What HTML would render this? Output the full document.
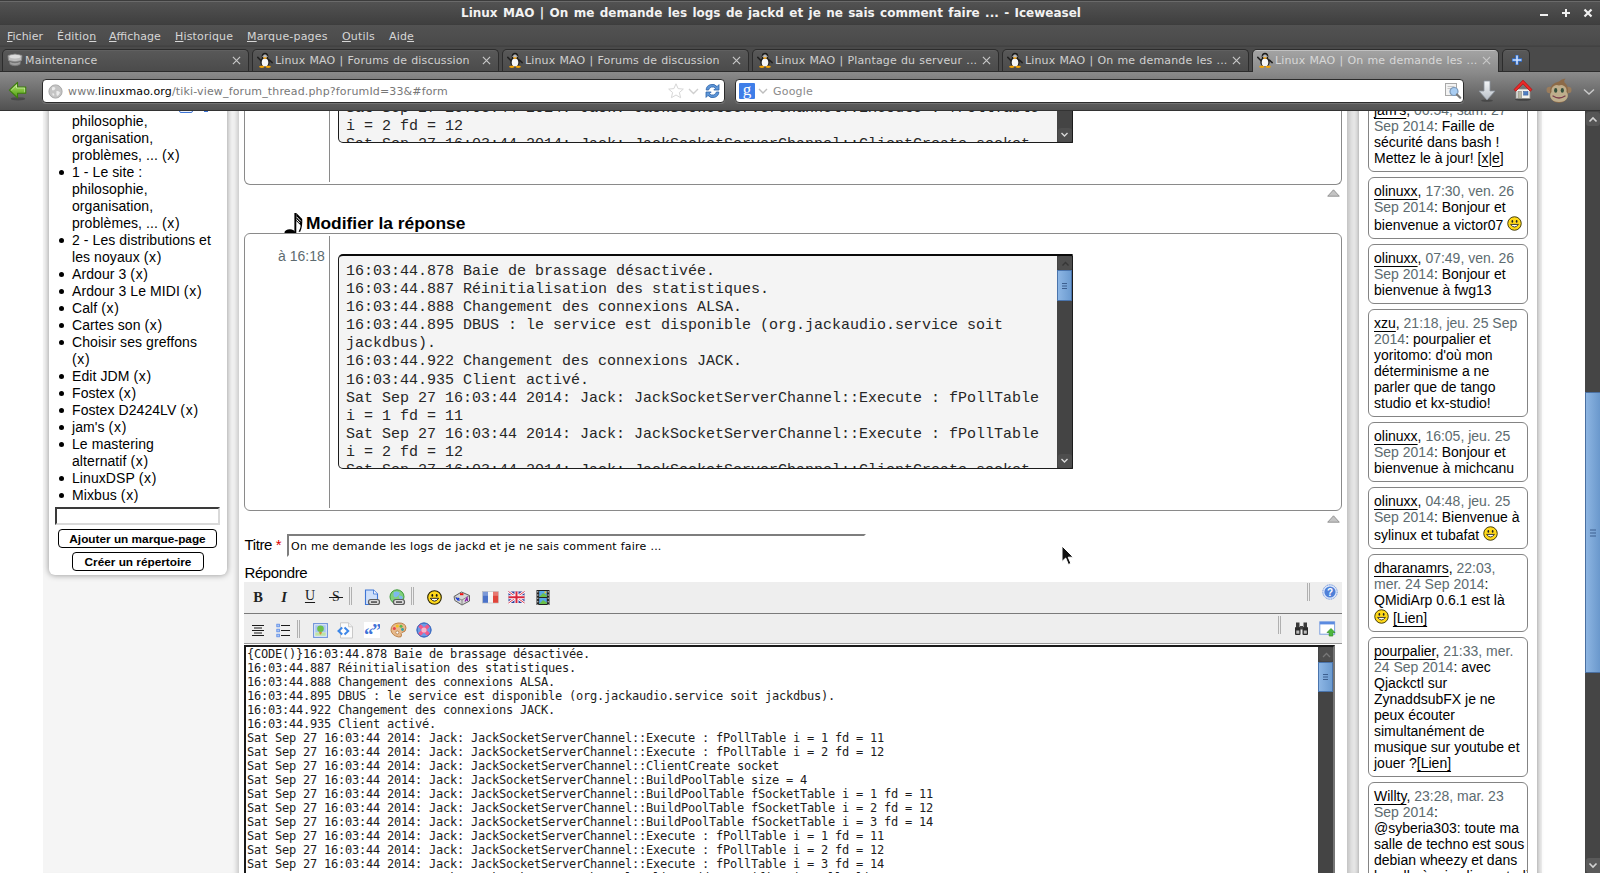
<!DOCTYPE html>
<html lang="fr">
<head>
<meta charset="utf-8">
<title>Linux MAO | On me demande les logs de jackd et je ne sais comment faire ... - Iceweasel</title>
<style>
*{box-sizing:border-box;}
html,body{margin:0;padding:0;}
body{width:1600px;height:873px;overflow:hidden;background:#fff;position:relative;font-family:"Liberation Sans",sans-serif;font-size:14px;color:#000;}
.abs{position:absolute;}
/* ---------- browser chrome ---------- */
#chrome{left:0;top:0;width:1600px;height:111px;font-family:"DejaVu Sans",sans-serif;color:#ddd;z-index:50;}
#titlebar{left:0;top:0;width:1600px;height:25px;background:linear-gradient(#3c3c3c 0,#3c3c3c 1px,#6a6a6a 1px,#6a6a6a 2px,#525252 2px,#3f3f3f 24px,#3c3c3c 25px);}
#titlebar .t{left:461px;top:5.5px;font-weight:bold;font-size:12px;color:#f2f2f2;word-spacing:1.200px;white-space:nowrap;}
#menubar{left:0;top:25px;width:1600px;height:22px;background:linear-gradient(#525252 0,#4a4a4a 20px,#404040 21px,#444 22px);font-size:11px;letter-spacing:.18px;color:#d6d6d6;}
#menubar span{position:absolute;top:5px;white-space:nowrap;}
#menubar u{text-decoration:underline;text-underline-offset:1px;}
#tabbar{left:0;top:47px;width:1600px;height:25px;background:#4a4a4a;border-bottom:1px solid #2c2c2c;}
.tab{position:absolute;top:2px;width:247px;height:22px;border:1px solid #2c2c2c;border-bottom:none;border-radius:5px 5px 0 0;background:linear-gradient(#686868 0,#585858 1px,#4b4b4b 100%);font-size:11px;letter-spacing:.15px;word-spacing:.45px;color:#d0d0d0;white-space:nowrap;}
.tab.active{height:23px;background:linear-gradient(#d0d0d0 0,#a2a2a2 1.500px,#8b8b8b 100%);color:#d8d8d8;}
.tab .fav{position:absolute;left:4px;top:2px;}
.url b{font-weight:normal;color:#000;}
.url{letter-spacing:.15px;}
.tab .lbl{position:absolute;left:22px;top:4px;}
.tab .x{position:absolute;right:7px;top:6px;width:9px;height:9px;}
#navbar{left:0;top:72px;width:1600px;height:39px;background:linear-gradient(#8b8b8b 0,#515151 38px,#333 38px,#333 39px);}
.field{position:absolute;top:7px;height:24px;background:#fff;border:1px solid #2b2b2b;border-radius:4px;font-size:11px;color:#777;box-shadow:0 1px 0 rgba(255,255,255,.15);}
/* ---------- page ---------- */
#page{left:0;top:110px;width:1585px;height:763px;overflow:hidden;background:#fff;}
#lcol{left:43px;top:0;width:196px;height:763px;background:#f5f5f5;box-shadow:inset -6px 0 5px -4px rgba(0,0,0,.2);}
#rcol{left:1347px;top:0;width:195px;height:763px;background:#f0f0f0;box-shadow:inset 7px 0 6px -4px rgba(0,0,0,.22);}

/* ---------- left column ---------- */
#lbox{left:6px;top:-40px;width:178px;height:505px;background:#fff;border-radius:0 0 6px 6px;box-shadow:0 0 6px rgba(0,0,0,.42);}
#lbox ul{position:absolute;left:0;top:26px;letter-spacing:.08px;margin:0;padding:0 0 0 23px;width:172px;list-style:none;font-size:14px;line-height:17px;}
#lbox li{position:relative;}
#lbox .rm{letter-spacing:.7px;}
#lbox li:before{content:"";position:absolute;left:-13.5px;top:6px;width:5px;height:5px;border-radius:50%;background:#000;}
#lbox .inp{position:absolute;left:6px;top:437px;width:165px;height:18px;background:#fff;border:2px solid;border-color:#3a3a3a #d9d9d9 #d9d9d9 #3a3a3a;}
.btn{position:absolute;height:19px;border:1px solid #000;border-radius:4px;background:#fff;font-weight:bold;font-size:11.800px;line-height:18px;text-align:center;white-space:nowrap;}
/* ---------- main ---------- */
#main{left:0;top:0;width:1347px;height:763px;}
.post{position:absolute;left:244px;width:1098px;border:1px solid #8a8a8a;border-radius:6px;}
.post .sep{position:absolute;left:84px;top:2px;bottom:2px;width:1px;background:#8a8a8a;}
.code{position:absolute;left:93px;width:735px;border:1px solid #1c1c1c;border-top:2px solid #0a0a0a;border-radius:5px 1px 1px 5px;background:#f4f4f4;overflow:hidden;font-family:"Liberation Mono",monospace;font-size:15px;line-height:18.100px;color:#262626;}
.code pre{position:absolute;left:7px;margin:0;font:inherit;white-space:pre;}
.vsb{position:absolute;background:#444;}
.vsb .thumb{position:absolute;left:0;right:0;background:linear-gradient(90deg,#8db6e4,#6c9bd0);border:1px solid #4a74ac;}
.vsb .arr{position:absolute;left:1px;right:0;height:14px;background:#4e4e4e;border-radius:3px;}
h3.mod{position:absolute;left:306px;top:101px;margin:0;font-size:17.4px;line-height:24px;font-weight:bold;white-space:nowrap;}
.tb{position:absolute;left:244px;width:1098px;background:#eee;}
#ta{position:absolute;left:244px;top:535px;width:1091px;height:240px;border:2px solid #1a1a1a;border-right-color:#777;background:#fff;overflow:hidden;}
#ta pre{position:absolute;left:1px;top:0;margin:0;font-family:"DejaVu Sans Mono",monospace;font-size:12px;line-height:14px;letter-spacing:-.224px;color:#1c1c1c;white-space:pre;}

/* ---------- right column ---------- */
#rbox{left:12px;top:-40px;width:178px;height:900px;background:#fff;box-shadow:0 0 6px rgba(0,0,0,.42);}
.sh{position:absolute;left:21px;width:160px;border:1px solid #848484;border-radius:6px;background:#fff;padding:5px 0 0 5px;font-size:14px;line-height:16px;white-space:nowrap;overflow:hidden;}
.sh div{height:16px;}
.sh a{color:#000;text-decoration:underline;text-underline-offset:2.500px;text-decoration-thickness:1px;}
.sh i{font-style:normal;color:#5d6b70;}
.sm{display:inline-block;vertical-align:-1px;width:15px;height:15px;}
#psb{left:1585px;top:110px;width:15px;height:763px;background:#454545;}
</style>
</head>
<body>
<div id="chrome" class="abs">
  <div id="titlebar" class="abs"><svg class="abs" style="left:1536px;top:5px" width="60" height="16" viewBox="0 0 60 16"><path d="M4 10 H12" stroke="#f0f0f0" stroke-width="2"/><path d="M26 8 H34 M30 4 V12" stroke="#f0f0f0" stroke-width="2"/><path d="M48.500 4.500 L55.500 11.500 M55.500 4.500 L48.500 11.500" stroke="#f0f0f0" stroke-width="2.200"/></svg><div class="t abs">Linux MAO | On me demande les logs de jackd et je ne sais comment faire ... - Iceweasel</div></div>
  <div id="menubar" class="abs"><span style="left:7px;letter-spacing:0"><u>F</u>ichier</span><span style="left:57px">Éditio<u>n</u></span><span style="left:109px;letter-spacing:0"><u>A</u>ffichage</span><span style="left:175px"><u>H</u>istorique</span><span style="left:247px"><u>M</u>arque-pages</span><span style="left:342px"><u>O</u>utils</span><span style="left:389px">Aid<u>e</u></span></div>
  <div id="tabbar" class="abs"><div class="tab" style="left:2px"><svg class="fav" viewBox="0 0 16 16" width="16" height="16"><path d="M1 3.500 Q8 .5 15 3.500 L14.500 8.500 Q8 11 1.500 8.500 Z" fill="#bdbdbd" stroke="#8a8a8a" stroke-width=".8"/><path d="M2.500 9.500 Q8 12 13.500 9.500 L13 12.500 Q8 15 3 12.500 Z" fill="#9f9f9f" stroke="#777" stroke-width=".8"/><ellipse cx="8" cy="4.600" rx="5.500" ry="1.900" fill="#dedede"/></svg><span class="lbl">Maintenance</span><svg class="x" viewBox="0 0 10 10"><path d="M1 1 L9 9 M9 1 L1 9" stroke="#c8c8c8" stroke-width="1.300" fill="none"/></svg></div><div class="tab" style="left:252px"><svg class="fav" viewBox="0 0 16 16" width="16" height="16"><path d="M3.600 8.200 L.8 5.400 M12.400 8.200 L15.200 10.600" stroke="#222" stroke-width="1.600" stroke-linecap="round"/><ellipse cx="8" cy="10" rx="4.700" ry="5" fill="#1a1a1a"/><ellipse cx="8" cy="4.200" rx="3.300" ry="3.500" fill="#1a1a1a"/><ellipse cx="8" cy="10.600" rx="3.300" ry="4" fill="#f6f6f6"/><ellipse cx="8" cy="4.300" rx="2.300" ry="1.700" fill="#eee"/><circle cx="6.900" cy="3.900" r=".6" fill="#111"/><circle cx="9.100" cy="3.900" r=".6" fill="#111"/><ellipse cx="8" cy="5.900" rx="1.700" ry=".9" fill="#f0a010"/><ellipse cx="4.800" cy="14.800" rx="2.700" ry="1.100" fill="#f5a300"/><ellipse cx="11.200" cy="14.800" rx="2.700" ry="1.100" fill="#f5a300"/></svg><span class="lbl">Linux MAO | Forums de discussion</span><svg class="x" viewBox="0 0 10 10"><path d="M1 1 L9 9 M9 1 L1 9" stroke="#c8c8c8" stroke-width="1.300" fill="none"/></svg></div><div class="tab" style="left:502px"><svg class="fav" viewBox="0 0 16 16" width="16" height="16"><path d="M3.600 8.200 L.8 5.400 M12.400 8.200 L15.200 10.600" stroke="#222" stroke-width="1.600" stroke-linecap="round"/><ellipse cx="8" cy="10" rx="4.700" ry="5" fill="#1a1a1a"/><ellipse cx="8" cy="4.200" rx="3.300" ry="3.500" fill="#1a1a1a"/><ellipse cx="8" cy="10.600" rx="3.300" ry="4" fill="#f6f6f6"/><ellipse cx="8" cy="4.300" rx="2.300" ry="1.700" fill="#eee"/><circle cx="6.900" cy="3.900" r=".6" fill="#111"/><circle cx="9.100" cy="3.900" r=".6" fill="#111"/><ellipse cx="8" cy="5.900" rx="1.700" ry=".9" fill="#f0a010"/><ellipse cx="4.800" cy="14.800" rx="2.700" ry="1.100" fill="#f5a300"/><ellipse cx="11.200" cy="14.800" rx="2.700" ry="1.100" fill="#f5a300"/></svg><span class="lbl">Linux MAO | Forums de discussion</span><svg class="x" viewBox="0 0 10 10"><path d="M1 1 L9 9 M9 1 L1 9" stroke="#c8c8c8" stroke-width="1.300" fill="none"/></svg></div><div class="tab" style="left:752px"><svg class="fav" viewBox="0 0 16 16" width="16" height="16"><path d="M3.600 8.200 L.8 5.400 M12.400 8.200 L15.200 10.600" stroke="#222" stroke-width="1.600" stroke-linecap="round"/><ellipse cx="8" cy="10" rx="4.700" ry="5" fill="#1a1a1a"/><ellipse cx="8" cy="4.200" rx="3.300" ry="3.500" fill="#1a1a1a"/><ellipse cx="8" cy="10.600" rx="3.300" ry="4" fill="#f6f6f6"/><ellipse cx="8" cy="4.300" rx="2.300" ry="1.700" fill="#eee"/><circle cx="6.900" cy="3.900" r=".6" fill="#111"/><circle cx="9.100" cy="3.900" r=".6" fill="#111"/><ellipse cx="8" cy="5.900" rx="1.700" ry=".9" fill="#f0a010"/><ellipse cx="4.800" cy="14.800" rx="2.700" ry="1.100" fill="#f5a300"/><ellipse cx="11.200" cy="14.800" rx="2.700" ry="1.100" fill="#f5a300"/></svg><span class="lbl">Linux MAO | Plantage du serveur ...</span><svg class="x" viewBox="0 0 10 10"><path d="M1 1 L9 9 M9 1 L1 9" stroke="#c8c8c8" stroke-width="1.300" fill="none"/></svg></div><div class="tab" style="left:1002px"><svg class="fav" viewBox="0 0 16 16" width="16" height="16"><path d="M3.600 8.200 L.8 5.400 M12.400 8.200 L15.200 10.600" stroke="#222" stroke-width="1.600" stroke-linecap="round"/><ellipse cx="8" cy="10" rx="4.700" ry="5" fill="#1a1a1a"/><ellipse cx="8" cy="4.200" rx="3.300" ry="3.500" fill="#1a1a1a"/><ellipse cx="8" cy="10.600" rx="3.300" ry="4" fill="#f6f6f6"/><ellipse cx="8" cy="4.300" rx="2.300" ry="1.700" fill="#eee"/><circle cx="6.900" cy="3.900" r=".6" fill="#111"/><circle cx="9.100" cy="3.900" r=".6" fill="#111"/><ellipse cx="8" cy="5.900" rx="1.700" ry=".9" fill="#f0a010"/><ellipse cx="4.800" cy="14.800" rx="2.700" ry="1.100" fill="#f5a300"/><ellipse cx="11.200" cy="14.800" rx="2.700" ry="1.100" fill="#f5a300"/></svg><span class="lbl">Linux MAO | On me demande les ...</span><svg class="x" viewBox="0 0 10 10"><path d="M1 1 L9 9 M9 1 L1 9" stroke="#c8c8c8" stroke-width="1.300" fill="none"/></svg></div><div class="tab active" style="left:1252px"><svg class="fav" viewBox="0 0 16 16" width="16" height="16"><path d="M3.600 8.200 L.8 5.400 M12.400 8.200 L15.200 10.600" stroke="#222" stroke-width="1.600" stroke-linecap="round"/><ellipse cx="8" cy="10" rx="4.700" ry="5" fill="#1a1a1a"/><ellipse cx="8" cy="4.200" rx="3.300" ry="3.500" fill="#1a1a1a"/><ellipse cx="8" cy="10.600" rx="3.300" ry="4" fill="#f6f6f6"/><ellipse cx="8" cy="4.300" rx="2.300" ry="1.700" fill="#eee"/><circle cx="6.900" cy="3.900" r=".6" fill="#111"/><circle cx="9.100" cy="3.900" r=".6" fill="#111"/><ellipse cx="8" cy="5.900" rx="1.700" ry=".9" fill="#f0a010"/><ellipse cx="4.800" cy="14.800" rx="2.700" ry="1.100" fill="#f5a300"/><ellipse cx="11.200" cy="14.800" rx="2.700" ry="1.100" fill="#f5a300"/></svg><span class="lbl">Linux MAO | On me demande les ...</span><svg class="x" viewBox="0 0 10 10"><path d="M1 1 L9 9 M9 1 L1 9" stroke="#c8c8c8" stroke-width="1.300" fill="none"/></svg></div><div class="tab newtab" style="left:1502px;width:28px"><svg viewBox="0 0 12 12" style="position:absolute;left:8px;top:4px;width:12px;height:12px"><path d="M6 1 V11 M1 6 H11" stroke="#2f6fd0" stroke-width="3.4"/><path d="M6 1.6 V10.4 M1.6 6 H10.4" stroke="#cfe2ff" stroke-width="1.6"/></svg></div></div>
  <div id="navbar" class="abs">
<svg class="abs" style="left:8px;top:9px" width="20" height="21" viewBox="0 0 22 23"><defs><linearGradient id="gg" x1="0" y1="0" x2="0" y2="1"><stop offset="0" stop-color="#b5e86a"/><stop offset="1" stop-color="#4c9a12"/></linearGradient></defs><ellipse cx="11" cy="19.5" rx="8" ry="1.8" fill="rgba(0,0,0,.25)"/><path d="M1.5 10 L10.5 1.5 V6.5 H19.5 V13.5 H10.5 V18.5 Z" fill="url(#gg)" stroke="#3c7d0c" stroke-width="1.2" stroke-linejoin="round"/><path d="M3.6 10 L9.4 4.6 V7.7 H18.3 V12.3" fill="none" stroke="rgba(255,255,255,.45)" stroke-width="1"/></svg>
<div class="field" style="left:42px;width:683px">
  <svg class="abs" style="left:5px;top:4px" width="15" height="15" viewBox="0 0 15 15"><circle cx="7.5" cy="7.5" r="6.6" fill="#c4c4c4" stroke="#a9a9a9" stroke-width="1"/><path d="M4 3.5 Q6 2.5 7.5 4 Q7 6 5 6.5 Q3.5 6 4 3.5 Z M8.5 7 Q11 6.5 12 8.5 Q11 11.5 9 12 Q8 9.5 8.5 7 Z M4.5 9 Q6 9 6.5 11 Q5.5 12 4.5 11 Z" fill="#ececec"/></svg>
  <span class="abs url" style="left:25px;top:5px">www.<b>linuxmao.org</b>/tiki-view_forum_thread.php?forumId=33&amp;#form</span>
  <svg class="abs" style="left:624px;top:2px" width="18" height="18" viewBox="0 0 18 18"><path d="M9 1.8 L11.1 6.6 L16.3 7.1 L12.4 10.5 L13.6 15.7 L9 13 L4.4 15.7 L5.6 10.5 L1.7 7.1 L6.9 6.6 Z" fill="#fff" stroke="#d6d6d6" stroke-width="1" stroke-linejoin="round"/></svg>
  <svg class="abs" style="left:645px;top:8px" width="11" height="7" viewBox="0 0 11 7"><path d="M1 1 L5.5 5.5 L10 1" fill="none" stroke="#cfcfcf" stroke-width="1.4"/></svg>
  <svg class="abs" style="left:661px;top:2px" width="17" height="18" viewBox="0 0 17 18"><path d="M2.2 8 A6 5.6 0 0 1 13 4.6 L15 2.6 V8 H9.8 L11.6 6.2 A4 3.6 0 0 0 4.6 8 Z" fill="#5d96d8" stroke="#2c62a8" stroke-width=".8"/><path d="M14.8 10 A6 5.6 0 0 1 4 13.4 L2 15.4 V10 H7.2 L5.4 11.8 A4 3.6 0 0 0 12.4 10 Z" fill="#5d96d8" stroke="#2c62a8" stroke-width=".8"/></svg>
</div>
<div class="field" style="left:735px;width:729px">
  <div class="abs" style="left:3px;top:3px;width:16px;height:16px;background:#3f7ee8;border-radius:1px;color:#fff;font:17px/13px 'Liberation Serif',serif;text-align:center">g</div>
  <svg class="abs" style="left:22px;top:8px" width="10" height="7" viewBox="0 0 10 7"><path d="M1 1 L5 5 L9 1" fill="none" stroke="#bdbdbd" stroke-width="1.4"/></svg>
  <span class="abs" style="left:37px;top:5px;color:#8a8a8a;letter-spacing:.2px">Google</span>
  <svg class="abs" style="left:708px;top:2px" width="18" height="18" viewBox="0 0 18 18"><rect x="1.5" y="1.5" width="11" height="12" fill="#f3f3f3" stroke="#a8a8a8"/><path d="M3.5 4.5 H10.5 M3.5 6.5 H8" stroke="#c8c8c8"/><circle cx="10" cy="9.5" r="4" fill="#a9cdf2" stroke="#7b98b8" stroke-width="1.2"/><path d="M13 12.5 L16.2 15.7" stroke="#7a7a7a" stroke-width="2.2" stroke-linecap="round"/></svg>
</div>
<svg class="abs" style="left:1478px;top:8px" width="18" height="22" viewBox="0 0 18 22"><defs><linearGradient id="dg" x1="0" y1="0" x2="0" y2="1"><stop offset="0" stop-color="#f4f6f8"/><stop offset="1" stop-color="#b9c0c8"/></linearGradient></defs><ellipse cx="9" cy="20.6" rx="6" ry="1.2" fill="rgba(0,0,0,.25)"/><path d="M6 1 H12 V11 H17 L9 20 L1 11 H6 Z" fill="url(#dg)" stroke="#8e969e" stroke-width=".8" stroke-linejoin="round"/></svg>
<svg class="abs" style="left:1513px;top:7px" width="20" height="22" viewBox="0 0 20 22"><ellipse cx="10" cy="20.4" rx="8" ry="1.4" fill="rgba(0,0,0,.3)"/><rect x="3" y="10" width="14" height="9.5" fill="#f2f2ee" stroke="#8a8a86" stroke-width=".8"/><rect x="5" y="12.5" width="3.4" height="7" fill="#b9b7a4" stroke="#777" stroke-width=".5"/><rect x="10.6" y="12.5" width="4.4" height="3.6" fill="#4f7fc4" stroke="#355a91" stroke-width=".5"/><path d="M10 1.2 L19 10.6 L17.2 12.2 L10 4.8 L2.8 12.2 L1 10.6 Z" fill="#ee2a2a" stroke="#b50f0f" stroke-width=".8" stroke-linejoin="round"/></svg>
<svg class="abs" style="left:1546px;top:6px" width="26" height="26" viewBox="0 0 26 26"><circle cx="3.800" cy="12" r="3.300" fill="#9a7c5c"/><circle cx="22.200" cy="12" r="3.300" fill="#9a7c5c"/><path d="M13 3.500 Q16.500 0 19.500 .8 Q17.500 2.500 18.500 4.500 Q22.500 7.500 22 14 Q22.500 24.500 13 25 Q3.500 24.500 4 14 Q3.500 5.500 13 3.500 Z" fill="#8c6a48"/><path d="M13 7.500 Q16 6.500 18 8 Q21 9.500 20.500 14 Q22.500 16 21.500 19.500 Q19.500 24 13 24 Q6.500 24 4.500 19.500 Q3.500 16 5.500 14 Q5 9.500 8 8 Q10 6.500 13 7.500 Z" fill="#bfae8c"/><ellipse cx="9.700" cy="12.400" rx="1.600" ry="2.300" fill="#35503c"/><ellipse cx="16.300" cy="12.400" rx="1.600" ry="2.300" fill="#35503c"/><path d="M7 18 Q13 22 19 18" fill="none" stroke="#7a3a4a" stroke-width="1.300" stroke-linecap="round"/></svg>
<svg class="abs" style="left:1583px;top:16px" width="12" height="8" viewBox="0 0 12 8"><path d="M1 1.500 L6 6 L11 1.500" fill="none" stroke="#c9c9c9" stroke-width="1.500"/></svg>
</div>
</div>
<div id="page" class="abs">
  <div id="lcol" class="abs"><div id="lbox" class="abs"><ul><li>0 - Le site :<br>philosophie,<br>organisation,<br>problèmes, ... <span class="rm">(x)</span></li><li>1 - Le site :<br>philosophie,<br>organisation,<br>problèmes, ... <span class="rm">(x)</span></li><li>2 - Les distributions et<br>les noyaux <span class="rm">(x)</span></li><li>Ardour 3 <span class="rm">(x)</span></li><li>Ardour 3 Le MIDI <span class="rm">(x)</span></li><li>Calf <span class="rm">(x)</span></li><li>Cartes son <span class="rm">(x)</span></li><li>Choisir ses greffons<br><span class="rm">(x)</span></li><li>Edit JDM <span class="rm">(x)</span></li><li>Fostex <span class="rm">(x)</span></li><li>Fostex D2424LV <span class="rm">(x)</span></li><li>jam's <span class="rm">(x)</span></li><li>Le mastering<br>alternatif <span class="rm">(x)</span></li><li>LinuxDSP <span class="rm">(x)</span></li><li>Mixbus <span class="rm">(x)</span></li></ul><div class="inp"></div><div class="btn" style="left:9px;top:459px;width:159px">Ajouter un marque-page</div><div class="btn" style="left:23px;top:482px;width:132px">Créer un répertoire</div></div><div class="abs" style="left:136px;top:-8px;width:14px;height:11px;border:1px solid #3f76d6;border-radius:2px;background:#eef3fd"></div><div class="abs" style="left:161px;top:-5px;width:4px;height:7px;background:#3f76d6"></div></div>
  <div id="main" class="abs">
<div class="post" style="top:-130px;height:205px;border-top:none"><div class="sep"></div>
  <div class="code" style="top:-50px;height:213px"><pre style="top:168px">Sat Sep 27 16:03:44 2014: Jack: JackSocketServerChannel::Execute : fPollTable
i = 2 fd = 12
Sat Sep 27 16:03:44 2014: Jack: JackSocketServerChannel::ClientCreate socket</pre><div class="vsb" style="right:0;top:0;width:15px;height:210px"><div class="arr" style="bottom:0"><svg viewBox="0 0 15 16" width="15" height="16"><path d="M3.500 5 L6.500 8 L9.500 5" fill="none" stroke="#d8d8d8" stroke-width="1.400"/></svg></div></div></div>
</div>
<svg class="abs" style="left:1327px;top:79px" width="13" height="8" viewBox="0 0 13 8"><path d="M6.500 .8 L12.300 7.200 H.700 Z" fill="#c4c4c4" stroke="#8c8c8c" stroke-width=".9" stroke-linejoin="round"/></svg>
<svg class="abs" style="left:284px;top:102px" width="20" height="21" viewBox="0 0 20 21"><rect x="10.400" y="1" width="1.900" height="20" fill="#000"/><ellipse cx="5.800" cy="20.600" rx="5.300" ry="3.400" fill="#000"/><path d="M12.300 1 L18.200 7 Q18.800 14 16.200 19.800 H14.600 Q17 15 16.400 13 L12.300 9 Z" fill="#000"/><path d="M12.600 4.800 L16.800 9.300 M12.600 7.500 L15.800 11" stroke="#fff" stroke-width="1" fill="none"/></svg>
<h3 class="mod">Modifier la réponse</h3>
<div class="post" style="top:123px;height:278px"><div class="sep"></div>
  <span class="abs" style="left:33px;top:14px;color:#5d6b70;white-space:nowrap">à 16:18</span>
  <div class="code" style="top:20px;height:215px"><pre style="top:7px">16:03:44.878 Baie de brassage désactivée.
16:03:44.887 Réinitialisation des statistiques.
16:03:44.888 Changement des connexions ALSA.
16:03:44.895 DBUS : le service est disponible (org.jackaudio.service soit
jackdbus).
16:03:44.922 Changement des connexions JACK.
16:03:44.935 Client activé.
Sat Sep 27 16:03:44 2014: Jack: JackSocketServerChannel::Execute : fPollTable
i = 1 fd = 11
Sat Sep 27 16:03:44 2014: Jack: JackSocketServerChannel::Execute : fPollTable
i = 2 fd = 12
Sat Sep 27 16:03:44 2014: Jack: JackSocketServerChannel::ClientCreate socket</pre><div class="vsb" style="right:0;top:0;width:15px;height:212px"><div class="arr" style="top:0"><svg viewBox="0 0 15 16" width="15" height="16"><path d="M4.500 9.500 L7.500 6.500 L10.500 9.500" fill="none" stroke="#363636" stroke-width="1.300"/></svg></div><div class="thumb" style="top:14px;height:31px"><svg viewBox="0 0 13 8" width="13" height="8" style="position:absolute;left:0;top:50%;margin-top:-4px"><path d="M4 1.500 H9 M4 4 H9 M4 6.500 H9" stroke="#3d5f8f" stroke-width="1"/></svg></div><div class="arr" style="bottom:0"><svg viewBox="0 0 15 16" width="15" height="16"><path d="M3.500 5 L6.500 8 L9.500 5" fill="none" stroke="#d8d8d8" stroke-width="1.400"/></svg></div></div></div>
</div>
<svg class="abs" style="left:1327px;top:405px" width="13" height="8" viewBox="0 0 13 8"><path d="M6.500 .8 L12.300 7.200 H.700 Z" fill="#c4c4c4" stroke="#8c8c8c" stroke-width=".9" stroke-linejoin="round"/></svg>
<span class="abs" style="left:244.500px;top:426px;white-space:nowrap;font-size:15px;letter-spacing:-.4px">Titre <span style="color:#d00">*</span></span>
<div class="abs" style="left:287px;top:424px;width:579px;height:23px;border:2px solid;border-color:#7e7e7e #fff #fff #7e7e7e;background:#fff;font:11px/22px 'DejaVu Sans',sans-serif;letter-spacing:.25px;padding-left:2px;white-space:nowrap">On me demande les logs de jackd et je ne sais comment faire ...</div>
<span class="abs" style="left:244.500px;top:454px;white-space:nowrap;font-size:15px;letter-spacing:-.4px">Répondre</span>
<div class="tb" id="tb1" style="top:472px;height:32px;border-bottom:1px solid #7a7a7a"></div>
<div class="tb" id="tb2" style="top:504px;height:30px;border-bottom:1px solid #999"></div>
<span class="abs" style="left:250px;top:479px;width:16px;height:16px;text-align:center;font:bold 14.500px 'Liberation Serif',serif;color:#222;line-height:16px">B</span><span class="abs" style="left:276px;top:479px;width:16px;height:16px;text-align:center;font:italic bold 14.500px 'Liberation Serif',serif;color:#222;line-height:16px">I</span><span class="abs" style="left:302px;top:478px;width:16px;height:16px;text-align:center;font:14px/16px 'Liberation Serif',serif;color:#1a1a1a;text-decoration:underline;text-underline-offset:1.500px">U</span><span class="abs" style="left:328px;top:479px;width:16px;height:16px;text-align:center;font:14px/16px 'Liberation Serif',serif;color:#1a1a1a">S</span><div class="abs" style="left:329px;top:487px;width:14px;height:1px;background:#1a1a1a"></div><div class="abs" style="left:349px;top:477px;width:3px;height:18px;border-left:1px solid #b0b0b0;border-right:1px solid #b0b0b0"></div><svg class="abs" style="left:364px;top:479px" width="17" height="17" viewBox="0 0 17 17"><path d="M1.500 1 H9.500 L13.500 5 V15.500 H1.500 Z" fill="#cfe0fa" stroke="#3f76d6" stroke-width="1.100"/><path d="M9.500 1 V5 H13.500" fill="#eef4ff" stroke="#3f76d6" stroke-width=".8"/><rect x="4.500" y="10.500" width="11" height="5" rx="2.300" fill="#d9d9d9" stroke="#5c5c5c" stroke-width="1.200"/><rect x="7" y="12.300" width="6" height="1.500" fill="#4a4a4a"/></svg><svg class="abs" style="left:389px;top:479px" width="17" height="17" viewBox="0 0 17 17"><circle cx="8" cy="7.800" r="7" fill="#7fd07a" stroke="#3f9a3c" stroke-width="1"/><path d="M5 3 Q9 1.500 11 4 Q9 8 6 8.500 Q3.500 7 5 3 Z" fill="#7db7ee"/><path d="M9.500 6.500 Q13 6 14 8.500 L12 11 Q10 9.500 9.500 6.500 Z" fill="#7db7ee"/><rect x="4.500" y="10.500" width="11" height="5" rx="2.300" fill="#d9d9d9" stroke="#5c5c5c" stroke-width="1.200"/><rect x="7" y="12.300" width="6" height="1.500" fill="#4a4a4a"/></svg><div class="abs" style="left:411px;top:477px;width:3px;height:18px;border-left:1px solid #b0b0b0;border-right:1px solid #b0b0b0"></div><svg class="abs" style="left:427px;top:480px" width="15" height="15" viewBox="0 0 15 15"><circle cx="7.500" cy="7.500" r="6.800" fill="#ffd91a" stroke="#2a2400" stroke-width="1.100"/><ellipse cx="5.300" cy="5.400" rx=".9" ry="1.400" fill="#111"/><ellipse cx="9.700" cy="5.400" rx=".9" ry="1.400" fill="#111"/><path d="M3.300 8.300 Q7.500 14 11.700 8.300 Z" fill="#fff" stroke="#111" stroke-width=".9"/></svg><svg class="abs" style="left:453px;top:480px" width="18" height="16" viewBox="0 0 18 16"><path d="M1 6.500 L8.500 2 L16.500 5.500 L16.500 11 L9 15 L1.800 10.500 Z" fill="#d6d6d6" stroke="#555" stroke-width=".9"/><path d="M1 6.500 L9 10 L16.500 5.500 M9 10 V15" fill="none" stroke="#777" stroke-width=".8"/><rect x="7" y="3.200" width="3.400" height="2" fill="#e11"/><path d="M3 8 L6.500 10.500 M4 10 L6 8" stroke="#1133dd" stroke-width="1.200"/><path d="M12 11.500 L14 8 L14.500 11" stroke="#8a1aa8" stroke-width="1.300" fill="none"/></svg><svg class="abs" style="left:482px;top:481px" width="17" height="13" viewBox="0 0 17 13"><rect x=".5" y=".5" width="16" height="11.500" fill="#f4f4f4" stroke="#b9b9b9" stroke-width=".6"/><rect x=".8" y=".8" width="5.200" height="11" fill="#4a72c8"/><rect x="11" y=".8" width="5.200" height="11" fill="#e0453a"/><rect x=".8" y=".8" width="15.400" height="4" fill="rgba(255,255,255,.28)"/></svg><svg class="abs" style="left:508px;top:481px" width="17" height="13" viewBox="0 0 17 13"><rect x=".5" y=".5" width="16" height="11.500" fill="#2f3f9a"/><path d="M.5 .5 L16.500 12 M16.500 .5 L.5 12" stroke="#fff" stroke-width="2.600"/><path d="M.5 .5 L16.500 12 M16.500 .5 L.5 12" stroke="#d8263c" stroke-width=".9"/><path d="M8.500 .5 V12 M.5 6.250 H16.500" stroke="#fff" stroke-width="4"/><path d="M8.500 .5 V12 M.5 6.250 H16.500" stroke="#d8263c" stroke-width="2"/></svg><svg class="abs" style="left:536px;top:479px" width="14" height="17" viewBox="0 0 14 17"><rect x=".5" y="1" width="13" height="15" fill="#222"/><rect x="3.200" y="2" width="7.600" height="6" fill="#58a8e8"/><path d="M3.200 8 L7 4 L10.800 6.500 V8 Z" fill="#6cc04a"/><rect x="3.200" y="9" width="7.600" height="6" fill="#58a8e8"/><path d="M3.200 15 L7 11 L10.800 13.500 V15 Z" fill="#6cc04a"/><path d="M1.800 2 V16 M12.200 2 V16" stroke="#ddd" stroke-width="1" stroke-dasharray="1.500 1.800"/><rect x="8.500" y="2.500" width="1.800" height="1.800" fill="#f5d020"/></svg><div class="abs" style="left:1307px;top:473px;width:3px;height:18px;border-left:1px solid #b0b0b0;border-right:1px solid #b0b0b0"></div><svg class="abs" style="left:1322px;top:474px" width="16" height="16" viewBox="0 0 16 16"><circle cx="8" cy="8" r="7.200" fill="#dfe9fb" stroke="#6d93de" stroke-width="1" stroke-dasharray="1.200 .6"/><circle cx="8" cy="8" r="5.600" fill="#4f80d8"/><text x="8" y="11.600" text-anchor="middle" font-family="Liberation Sans,sans-serif" font-weight="bold" font-size="10" fill="#fff">?</text></svg><svg class="abs" style="left:251px;top:514px" width="14" height="13" viewBox="0 0 14 13"><path d="M1 1.500 H13 M3 4 H11 M1 6.500 H13 M3 9 H11 M1 11.500 H13" stroke="#1a1a1a" stroke-width="1.100"/></svg><svg class="abs" style="left:276px;top:513px" width="15" height="15" viewBox="0 0 15 15"><path d="M5 2.500 H14 M5 7.500 H14 M5 12.500 H14" stroke="#1a1a1a" stroke-width="1.100"/><rect x=".8" y="1.200" width="2.600" height="2.600" fill="#a9c4f5" stroke="#5c8ce6" stroke-width=".8"/><rect x=".8" y="6.200" width="2.600" height="2.600" fill="#a9c4f5" stroke="#5c8ce6" stroke-width=".8"/><rect x=".8" y="11.200" width="2.600" height="2.600" fill="#a9c4f5" stroke="#5c8ce6" stroke-width=".8"/></svg><div class="abs" style="left:297px;top:510px;width:3px;height:18px;border-left:1px solid #b0b0b0;border-right:1px solid #b0b0b0"></div><svg class="abs" style="left:313px;top:513px" width="15" height="15" viewBox="0 0 15 15"><rect x=".6" y=".6" width="13.800" height="13.800" fill="#e8eefb" stroke="#6f93da" stroke-width="1.100"/><rect x="2.200" y="2.200" width="10.600" height="7.300" fill="#a8c6f0"/><rect x="2.200" y="9.500" width="10.600" height="3.300" fill="#bfe3a4"/><circle cx="7.500" cy="5.800" r="3.300" fill="#6cc04a"/><path d="M6 9 H9 L8 11.500 H7 Z" fill="#d98a3a"/></svg><svg class="abs" style="left:337px;top:512px" width="17" height="17" viewBox="0 0 17 17"><path d="M3.500 .8 H11.500 L15.500 4.800 V16 H3.500 Z" fill="#fbfbfb" stroke="#c4c4c4" stroke-width=".9"/><path d="M11.500 .8 V4.800 H15.500" fill="#eee" stroke="#c4c4c4" stroke-width=".8"/><path d="M5.200 5.500 L1.500 9 L5.200 12.500 M7.500 5.500 L11.200 9 L7.500 12.500" fill="none" stroke="#3c86e8" stroke-width="2" stroke-linejoin="miter"/></svg><div class="abs" style="left:364px;top:512px;width:16px;height:16px;background:#fff;overflow:hidden"><span style="position:absolute;left:0;top:4px;font:bold 19px/18px 'Liberation Serif',serif;color:#3f73d8;white-space:nowrap">“</span><span style="position:absolute;left:8px;top:0;font:bold 19px/18px 'Liberation Serif',serif;color:#3f73d8;white-space:nowrap">”</span></div><svg class="abs" style="left:390px;top:512px" width="17" height="16" viewBox="0 0 17 16"><path d="M8 1 Q15.500 .5 16 6 Q16 10 12 10.500 Q10.500 11 11.500 13 Q12 15.500 8.500 15 Q2 13.500 1 8.500 Q.8 2 8 1 Z" fill="#e7b98a" stroke="#b5793f" stroke-width=".9"/><circle cx="4.300" cy="6.500" r="1.500" fill="#e8434c"/><circle cx="7.300" cy="4" r="1.500" fill="#f3c21a"/><circle cx="11" cy="4.200" r="1.500" fill="#5cb84a"/><circle cx="12.500" cy="7.500" r="1.400" fill="#2fa0a8"/><circle cx="7.300" cy="10.500" r="1.500" fill="#fff" stroke="#a8703a" stroke-width=".7"/></svg><svg class="abs" style="left:416px;top:512px" width="16" height="16" viewBox="0 0 16 16"><circle cx="8" cy="8" r="7" fill="#6d9be6" stroke="#3e6fc4" stroke-width="1"/><path d="M3 3 L13 13 M13 3 L3 13" stroke="#f05a8c" stroke-width="3.600"/><circle cx="8" cy="8" r="2.600" fill="#f3b7cd"/><circle cx="8" cy="8" r="7" fill="none" stroke="#3e6fc4" stroke-width="1"/></svg><div class="abs" style="left:1278px;top:506px;width:3px;height:18px;border-left:1px solid #b0b0b0;border-right:1px solid #b0b0b0"></div><svg class="abs" style="left:1294px;top:511px" width="15" height="15" viewBox="0 0 15 15"><rect x="1" y="6" width="5.500" height="8" rx="1" fill="#2b2b2b"/><rect x="8.500" y="6" width="5.500" height="8" rx="1" fill="#2b2b2b"/><rect x="2" y="1.500" width="3.500" height="5" fill="#3a3a3a"/><rect x="9.500" y="1.500" width="3.500" height="5" fill="#3a3a3a"/><rect x="6" y="5" width="3" height="3.500" fill="#444"/><rect x="2.300" y="9.500" width="3" height="3.200" fill="#bdbdbd"/><rect x="9.800" y="9.500" width="3" height="3.200" fill="#bdbdbd"/></svg><svg class="abs" style="left:1319px;top:511px" width="17" height="16" viewBox="0 0 17 16"><rect x=".8" y=".8" width="14.800" height="12.400" fill="#fff" stroke="#7da0e0" stroke-width="1"/><rect x=".8" y=".8" width="14.800" height="2.600" fill="#5b8be0"/><path d="M12 7.500 L16 11.500 H13.800 V15 H10.200 V11.500 H8 Z" fill="#4cb83c" stroke="#2c8a22" stroke-width=".7"/></svg>
<div id="ta"><pre>{CODE()}16:03:44.878 Baie de brassage désactivée.
16:03:44.887 Réinitialisation des statistiques.
16:03:44.888 Changement des connexions ALSA.
16:03:44.895 DBUS : le service est disponible (org.jackaudio.service soit jackdbus).
16:03:44.922 Changement des connexions JACK.
16:03:44.935 Client activé.
Sat Sep 27 16:03:44 2014: Jack: JackSocketServerChannel::Execute : fPollTable i = 1 fd = 11
Sat Sep 27 16:03:44 2014: Jack: JackSocketServerChannel::Execute : fPollTable i = 2 fd = 12
Sat Sep 27 16:03:44 2014: Jack: JackSocketServerChannel::ClientCreate socket
Sat Sep 27 16:03:44 2014: Jack: JackSocketServerChannel::BuildPoolTable size = 4
Sat Sep 27 16:03:44 2014: Jack: JackSocketServerChannel::BuildPoolTable fSocketTable i = 1 fd = 11
Sat Sep 27 16:03:44 2014: Jack: JackSocketServerChannel::BuildPoolTable fSocketTable i = 2 fd = 12
Sat Sep 27 16:03:44 2014: Jack: JackSocketServerChannel::BuildPoolTable fSocketTable i = 3 fd = 14
Sat Sep 27 16:03:44 2014: Jack: JackSocketServerChannel::Execute : fPollTable i = 1 fd = 11
Sat Sep 27 16:03:44 2014: Jack: JackSocketServerChannel::Execute : fPollTable i = 2 fd = 12
Sat Sep 27 16:03:44 2014: Jack: JackSocketServerChannel::Execute : fPollTable i = 3 fd = 14
Sat Sep 27 16:03:44 2014: Jack: JackSocketServerChannel::ClientAdd : notification all clients</pre><div class="vsb" style="right:0;top:0;width:15px;height:240px"><div class="arr" style="top:0"><svg viewBox="0 0 15 16" width="15" height="16"><path d="M4 10 L7.5 6.500 L11 10" fill="none" stroke="#777" stroke-width="1.300"/></svg></div><div class="thumb" style="top:15px;height:30px"><svg viewBox="0 0 13 8" width="13" height="8" style="position:absolute;left:0;top:50%;margin-top:-4px"><path d="M4 1.500 H9 M4 4 H9 M4 6.500 H9" stroke="#3d5f8f" stroke-width="1"/></svg></div></div></div>
<svg class="abs" style="left:1061px;top:435px;z-index:40" width="14" height="21" viewBox="0 0 14 21"><path d="M1 1 V16.500 L4.700 13 L7.400 19.500 L9.900 18.400 L7.200 12.200 H12.200 Z" fill="#111" stroke="#fff" stroke-width="1" stroke-linejoin="round"/></svg>
</div>
  <div id="rcol" class="abs"><div id="rbox" class="abs"></div><div class="sh" style="top:-14px;height:76px"><div><a>jam's</a>, <i>06:54, sam. 27</i></div><div><i>Sep 2014</i>: Faille de</div><div>sécurité dans bash !</div><div>Mettez le à jour! [<a>x</a>|<a>e</a>]</div></div><div class="sh" style="top:67px;height:62px"><div><a>olinuxx</a>, <i>17:30, ven. 26</i></div><div><i>Sep 2014</i>: Bonjour et</div><div style="margin-top:1px">bienvenue a victor07 <svg class="sm" viewBox="0 0 16 16"><circle cx="8" cy="8" r="7.2" fill="#ffd91a" stroke="#3a3200" stroke-width="1"/><ellipse cx="5.700" cy="5.800" rx=".9" ry="1.500" fill="#222"/><ellipse cx="10.300" cy="5.800" rx=".9" ry="1.500" fill="#222"/><path d="M3.800 9 Q8 14.500 12.200 9 Z" fill="#fff" stroke="#222" stroke-width=".9"/></svg></div></div><div class="sh" style="top:134px;height:60px"><div><a>olinuxx</a>, <i>07:49, ven. 26</i></div><div><i>Sep 2014</i>: Bonjour et</div><div>bienvenue à fwg13</div></div><div class="sh" style="top:199px;height:108px"><div><a>xzu</a>, <i>21:18, jeu. 25 Sep</i></div><div><i>2014</i>: pourpalier et</div><div>yoritomo: d'où mon</div><div>déterminisme a ne</div><div>parler que de tango</div><div>studio et kx-studio!</div></div><div class="sh" style="top:312px;height:60px"><div><a>olinuxx</a>, <i>16:05, jeu. 25</i></div><div><i>Sep 2014</i>: Bonjour et</div><div>bienvenue à michcanu</div></div><div class="sh" style="top:377px;height:62px"><div><a>olinuxx</a>, <i>04:48, jeu. 25</i></div><div><i>Sep 2014</i>: Bienvenue à</div><div style="margin-top:1px">sylinux et tubafat <svg class="sm" viewBox="0 0 16 16"><circle cx="8" cy="8" r="7.2" fill="#ffd91a" stroke="#3a3200" stroke-width="1"/><ellipse cx="5.700" cy="5.800" rx=".9" ry="1.500" fill="#222"/><ellipse cx="10.300" cy="5.800" rx=".9" ry="1.500" fill="#222"/><path d="M3.800 9 Q8 14.500 12.200 9 Z" fill="#fff" stroke="#222" stroke-width=".9"/></svg></div></div><div class="sh" style="top:444px;height:78px"><div><a>dharanamrs</a>, <i>22:03,</i></div><div><i>mer. 24 Sep 2014</i>:</div><div>QMidiArp 0.6.1 est là</div><div style="margin-top:1px"><svg class="sm" viewBox="0 0 16 16"><circle cx="8" cy="8" r="7.2" fill="#ffd91a" stroke="#3a3200" stroke-width="1"/><ellipse cx="5.700" cy="5.800" rx=".9" ry="1.500" fill="#222"/><ellipse cx="10.300" cy="5.800" rx=".9" ry="1.500" fill="#222"/><path d="M3.800 9 Q8 14.500 12.200 9 Z" fill="#fff" stroke="#222" stroke-width=".9"/></svg> <a>[Lien]</a></div></div><div class="sh" style="top:527px;height:140px"><div><a>pourpalier</a>, <i>21:33, mer.</i></div><div><i>24 Sep 2014</i>: avec</div><div>Qjackctl sur</div><div>ZynaddsubFX je ne</div><div>peux écouter</div><div>simultanément de</div><div>musique sur youtube et</div><div>jouer ?<a>[Lien]</a></div></div><div class="sh" style="top:672px;height:120px"><div><a>Willty</a>, <i>23:28, mar. 23</i></div><div><i>Sep 2014</i>:</div><div>@syberia303: toute ma</div><div>salle de techno est sous</div><div>debian wheezy et dans</div><div>la salle à mix : linux studio</div></div></div>
</div>
<div id="psb" class="abs">
<div class="abs" style="left:1px;top:2px;width:14px;height:14px;background:#565656;border-radius:3px"><svg viewBox="0 0 14 15" width="14" height="15"><path d="M3.500 9.500 L7 6 L10.500 9.500" fill="none" stroke="#d4d4d4" stroke-width="1.600"/></svg></div>
<div class="abs" style="left:0;top:282px;width:15px;height:281px;background:linear-gradient(90deg,#8db5e2,#6a98cc);border:1px solid #4a6fa0;border-right:none"><svg viewBox="0 0 14 10" width="14" height="10" style="position:absolute;left:0;top:50%;margin-top:-5px"><path d="M4 2 H10 M4 5 H10 M4 8 H10" stroke="#3d5f8f" stroke-width="1"/></svg></div>
<div class="abs" style="left:1px;bottom:0;width:14px;height:15px;background:#5a5a5a;border-radius:3px 0 0 3px"><svg viewBox="0 0 14 15" width="14" height="15"><path d="M3.500 5.500 L7 9 L10.500 5.500" fill="none" stroke="#d4d4d4" stroke-width="1.600"/></svg></div>
</div>
</body>
</html>
